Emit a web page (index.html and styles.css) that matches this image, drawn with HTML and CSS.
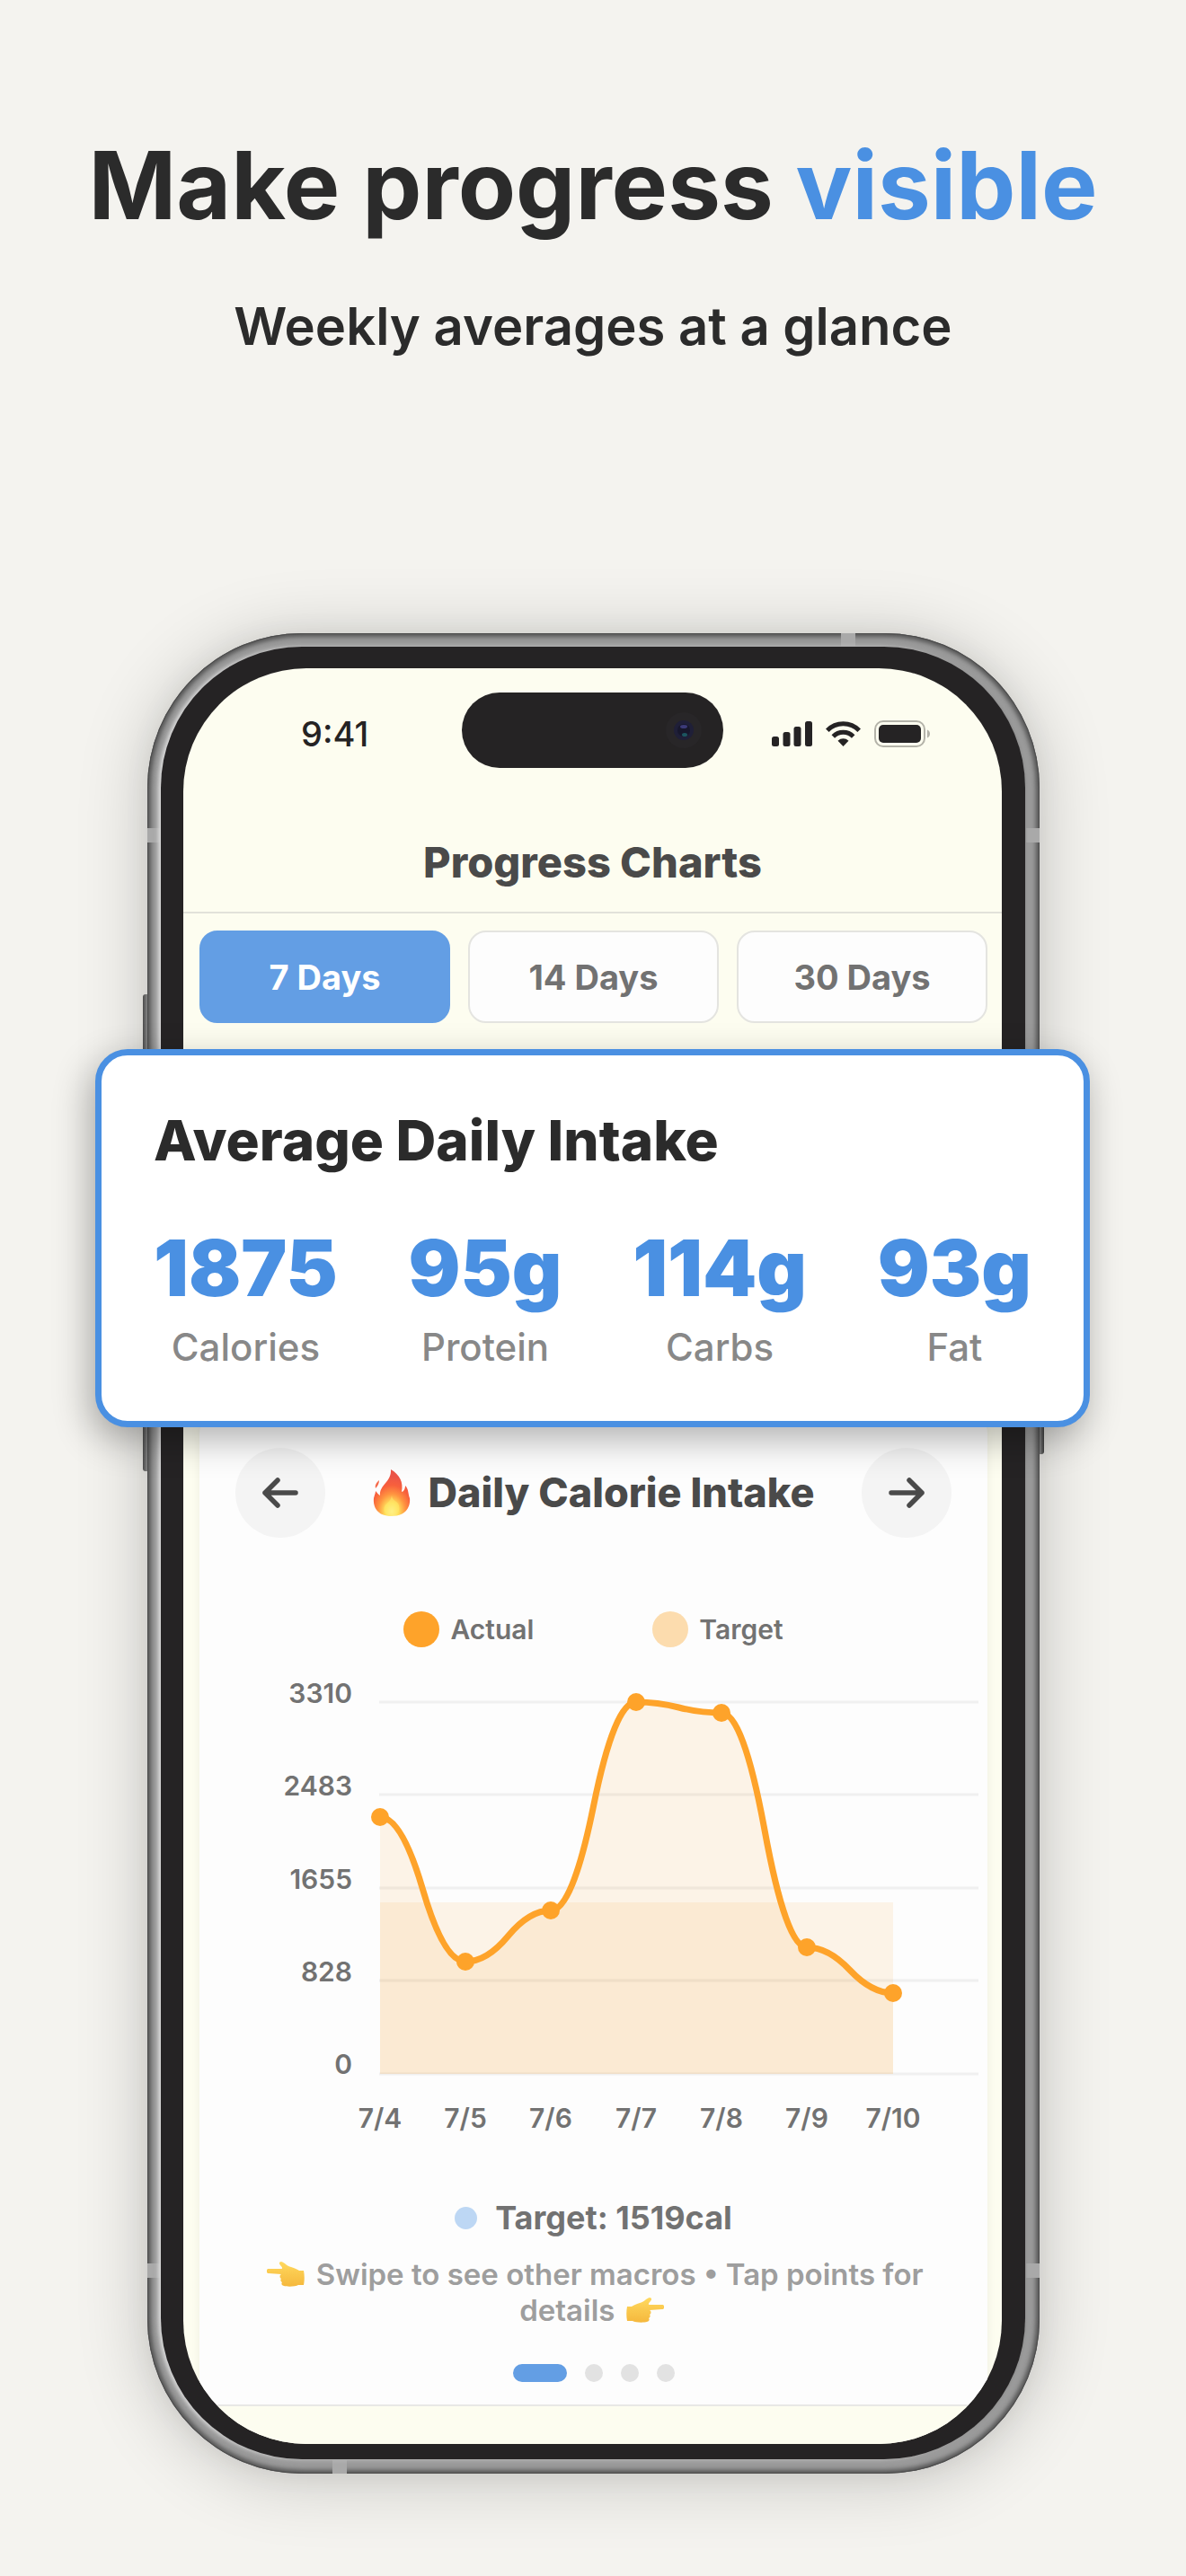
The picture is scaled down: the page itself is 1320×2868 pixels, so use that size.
FILE: index.html
```html
<!DOCTYPE html>
<html lang="en">
<head>
    <meta charset="UTF-8">
    <meta name="viewport" content="width=device-width, initial-scale=1.0">
    <title>Progress Charts</title>
    <link rel="stylesheet" href="styles.css">
</head>
<body>
    <header class="hero">
        <h1>Make progress <span>visible</span></h1>
        <p>Weekly averages at a glance</p>
    </header>

    <main class="stage">
        <!-- Side buttons and antenna bands -->
        <i class="side-key key-left"></i>
        <i class="side-key key-right"></i>

        <div class="phone">
            <i class="band band-left band-upper"></i>
            <i class="band band-right band-upper"></i>
            <i class="band band-left band-lower"></i>
            <i class="band band-right band-lower"></i>
            <i class="band band-top"></i>
            <i class="band band-bottom"></i>

            <div class="bezel">
                <div class="screen">
                    <!-- Status bar -->
                    <div class="status-bar">
                        <span class="time">9:41</span>
                        <div class="island">
                            <svg width="42" height="42" viewBox="0 0 42 42">
                                <circle cx="21" cy="21" r="20" fill="#282628"/>
                                <circle cx="21" cy="21" r="11" fill="#1f1f38"/>
                                <circle cx="21" cy="21" r="7" fill="#17172c"/>
                                <ellipse cx="21" cy="17" rx="4" ry="2" fill="#3b3a78"/>
                                <ellipse cx="22" cy="26" rx="3" ry="2" fill="#1c5560"/>
                            </svg>
                        </div>
                        <div class="status-icons">
                            <svg width="45" height="28" viewBox="0 0 45 28" fill="#252324">
                                <rect x="0" y="17" width="8" height="11" rx="2.5"/>
                                <rect x="12.5" y="12" width="8" height="16" rx="2.5"/>
                                <rect x="24.5" y="6" width="8" height="22" rx="2.5"/>
                                <rect x="37" y="0" width="8" height="28" rx="2.5"/>
                            </svg>
                            <svg width="39" height="28" viewBox="0 0 39 28">
                                <g fill="none" stroke="#252324" stroke-width="5">
                                    <path d="M1.8 10.2C11.5 .3 27.5 .3 37.2 10.2"/>
                                    <path d="M8.3 17C14.5 10.8 24.5 10.8 30.7 17"/>
                                </g>
                                <path d="M13.5 21.8C17 18.5 22 18.5 25.5 21.8L19.5 28Z" fill="#252324"/>
                            </svg>
                            <svg width="62" height="30" viewBox="0 0 62 30">
                                <rect x="1" y="1" width="55" height="28" rx="9" fill="none" stroke="#b4b3a9" stroke-width="2"/>
                                <rect x="5" y="5" width="47" height="20" rx="5" fill="#252324"/>
                                <path d="M59 10.5C63 12 63 18 59 19.5Z" fill="#b4b3a9"/>
                            </svg>
                        </div>
                    </div>

                    <div class="app-header">
                        <h2>Progress Charts</h2>
                    </div>

                    <!-- Range selector -->
                    <div class="range">
                        <button type="button" class="active">7 Days</button>
                        <button type="button">14 Days</button>
                        <button type="button">30 Days</button>
                    </div>

                    <section class="chart-card">
                        <div class="chart-nav">
                            <button type="button" class="round" aria-label="Previous chart">
                                <svg width="42" height="36" viewBox="0 0 42 36" fill="none" stroke="#4a4a4a" stroke-width="5.5" stroke-linecap="round" stroke-linejoin="round">
                                    <path d="M38 18H4M18 4L4 18L18 32"/>
                                </svg>
                            </button>
                            <h3>
                                <svg class="fire" width="42" height="52" viewBox="0 0 42 52">
                                    <defs>
                                        <radialGradient id="flame" cx=".5" cy=".9" r=".75">
                                            <stop offset="0" stop-color="#fff7a0"/>
                                            <stop offset=".25" stop-color="#ffdf5a"/>
                                            <stop offset=".5" stop-color="#ff9440"/>
                                            <stop offset=".75" stop-color="#f8603c"/>
                                            <stop offset="1" stop-color="#ec5548"/>
                                        </radialGradient>
                                    </defs>
                                    <path d="M20 0C30 6 34 14 32 25C34 25 36 22 36 18C40 22 39 27 41 32C42 40 38 52 21 52C5 52 0 42 1 32C2 28 3 26 3 24C5 26 6 28 8 29C7 17 21 14 20 0Z" fill="url(#flame)"/>
                                    <path d="M7 12C4 15 2 17 3 21C5 19 7 16 7 12Z" fill="#f5694a"/>
                                    <path d="M21 29C22 36 27 34 29 40C31 47 26 51 20 51C14 51 11 46 13 41C15 37 20 36 21 29Z" fill="#ffe96b" opacity=".5"/>
                                </svg>
                                Daily Calorie Intake
                            </h3>
                            <button type="button" class="round" aria-label="Next chart">
                                <svg width="42" height="36" viewBox="0 0 42 36" fill="none" stroke="#4a4a4a" stroke-width="5.5" stroke-linecap="round" stroke-linejoin="round">
                                    <path d="M4 18H38M24 4L38 18L24 32"/>
                                </svg>
                            </button>
                        </div>

                        <div class="legend">
                            <span><i class="dot-actual"></i>Actual</span>
                            <span><i class="dot-target"></i>Target</span>
                        </div>

                        <svg class="chart" viewBox="0 0 877 566" role="img" aria-label="Daily calories from 7/4 to 7/10">
                            <g class="grid">
                                <path d="M200 61H867M200 164H867M200 268H867M200 371H867M200 475H867"/>
                            </g>
                            <!-- Target area, then the area under the curve -->
                            <path class="area" d="M201 284H772V475H201Z"/>
                            <path class="area" d="M201 189Q225 189 248.5 269.5Q272 350 296 350Q320 350 343.5 321.5Q367 293 391 293Q415 293 438.5 177Q462 61 486 61Q510 61 533.5 67Q557 73 581 73Q605 73 629 203.5Q653 334 676 334Q700 334 724 359.5Q748 385 772 385V475H201Z"/>
                            <path class="line" d="M201 189Q225 189 248.5 269.5Q272 350 296 350Q320 350 343.5 321.5Q367 293 391 293Q415 293 438.5 177Q462 61 486 61Q510 61 533.5 67Q557 73 581 73Q605 73 629 203.5Q653 334 676 334Q700 334 724 359.5Q748 385 772 385"/>
                            <g fill="#fea32a">
                                <circle cx="201" cy="189" r="10"/>
                                <circle cx="296" cy="350" r="10"/>
                                <circle cx="391" cy="293" r="10"/>
                                <circle cx="486" cy="61" r="10"/>
                                <circle cx="581" cy="73" r="10"/>
                                <circle cx="676" cy="334" r="10"/>
                                <circle cx="772" cy="385" r="10"/>
                            </g>
                            <g class="labels" text-anchor="end">
                                <text x="170" y="62">3310</text>
                                <text x="170" y="165">2483</text>
                                <text x="170" y="269">1655</text>
                                <text x="170" y="372">828</text>
                                <text x="170" y="475">0</text>
                            </g>
                            <g class="labels" text-anchor="middle">
                                <text x="201" y="535">7/4</text>
                                <text x="296" y="535">7/5</text>
                                <text x="391" y="535">7/6</text>
                                <text x="486" y="535">7/7</text>
                                <text x="581" y="535">7/8</text>
                                <text x="676" y="535">7/9</text>
                                <text x="772" y="535">7/10</text>
                            </g>
                        </svg>

                        <p class="target"><i></i>Target: 1519cal</p>
                        <p class="hint">
                            <svg class="hand" width="42" height="28" viewBox="0 0 42 28">
                                <use href="#hand"/>
                            </svg>
                            Swipe to see other macros • Tap points for details
                            <svg class="hand" width="42" height="28" viewBox="0 0 42 28">
                                <defs>
                                    <linearGradient id="skin" x1="0" y1="0" x2="0" y2="1">
                                        <stop offset="0" stop-color="#ffd95e"/>
                                        <stop offset="1" stop-color="#f5b83d"/>
                                    </linearGradient>
                                    <path id="hand" fill="url(#skin)" d="M2 8H16C18 8 17 6 15 4C13 2 14 0 16 0C20 1 22 5 27 6C31 7 34 9 36 10L41 10C42 15 42 21 41 26L35 26C32 28 22 28 19 27C16 26 16 24 17 23C15 22 15 20 16 19C14 18 14 15 16 14L2 13C-1 13 -1 8 2 8Z"/>
                                </defs>
                                <use href="#hand" transform="matrix(-1 0 0 1 42 0)"/>
                            </svg>
                        </p>

                        <div class="pager">
                            <i class="current"></i><i></i><i></i><i></i>
                        </div>
                    </section>
                    <div class="tab-edge"></div>
                </div>
            </div>
        </div>

        <!-- Summary card floating over the phone -->
        <section class="summary">
            <h2>Average Daily Intake</h2>
            <dl>
                <div><dd>1875</dd><dt>Calories</dt></div>
                <div><dd>95g</dd><dt>Protein</dt></div>
                <div><dd>114g</dd><dt>Carbs</dt></div>
                <div><dd>93g</dd><dt>Fat</dt></div>
            </dl>
        </section>
    </main>
</body>
</html>
```
FILE: styles.css
```css
* {
    box-sizing: border-box;
}

body {
    font-family: Inter, "Liberation Sans", sans-serif;
    margin: 0;
    padding: 138px 0 114px;
    background: #f4f3ef;
    color: #2b2b2b;
}

h1, h2, h3, p, dl, dd {
    margin: 0;
}

button {
    font-family: inherit;
    cursor: pointer;
}

svg {
    display: block;
}

/* Headline */
.hero {
    text-align: center;
}

.hero h1 {
    font-size: 105px;
    line-height: 136px;
    font-weight: 700;
}

.hero h1 span {
    color: #4a90e2;
}

.hero p {
    margin-top: 52px;
    font-size: 58px;
    line-height: 74px;
    font-weight: 600;
}

/* Phone */
.stage {
    position: relative;
    margin: 305px 163px 0 164px;
}

.phone {
    position: relative;
    padding: 15px 16px 16px 15px;
    border-radius: 172px;
    background: #9a9a9a;
    box-shadow: 0 6px 80px rgba(0, 0, 0, 0.2), 0 0 30px rgba(0, 0, 0, 0.06),
        inset 0 0 0 1px #4c4c4c, inset 0 0 5px 4px #555;
}

.bezel {
    position: relative;
    padding: 24px 26px 17px 25px;
    border-radius: 157px;
    background: #252324;
    box-shadow: -3px 0 4px #dcdcdc, 0 0 2px 1px #888;
}

.screen {
    overflow: hidden;
    border-radius: 137px;
    background: #fdfdf0;
}

.side-key {
    position: absolute;
    width: 10px;
    border-radius: 3px;
    background: linear-gradient(90deg, #555, #999, #444);
}

.key-left {
    left: -5px;
    top: 402px;
    height: 531px;
}

.key-right {
    right: -5px;
    top: 500px;
    height: 414px;
}

.band {
    position: absolute;
    width: 15px;
    height: 16px;
    background: #a9a9a9;
}

.band-left { left: 0; }
.band-right { right: 0; }
.band-upper { top: 217px; }
.band-lower { bottom: 218px; }

.band-top {
    top: 0;
    right: 205px;
    width: 16px;
    height: 15px;
}

.band-bottom {
    bottom: 0;
    left: 206px;
    width: 16px;
    height: 15px;
}

/* Status bar */
.status-bar {
    display: grid;
    grid-template-columns: 1fr auto 1fr;
    padding-top: 27px;
}

.time {
    padding: 8px 0 0 131px;
    font-size: 38px;
    line-height: 76px;
    font-weight: 500;
    color: #252324;
}

.island {
    display: flex;
    align-items: center;
    justify-content: flex-end;
    width: 291px;
    height: 84px;
    padding-right: 23px;
    border-radius: 42px;
    background: #252324;
}

.status-icons {
    display: flex;
    align-items: center;
    justify-content: flex-end;
    gap: 15px;
    padding: 8px 80px 0 0;
}

.app-header {
    padding: 77px 0 27px;
    border-bottom: 2px solid #e2e2da;
    text-align: center;
}

.app-header h2 {
    font-size: 47px;
    line-height: 56px;
    font-weight: 800;
    color: #4a4a4a;
}

/* Range buttons */
.range {
    display: flex;
    gap: 20px;
    padding: 19px 16px 0 18px;
}

.range button {
    flex: 1;
    height: 103px;
    padding: 0;
    border: 2px solid #e4e4e0;
    border-radius: 20px;
    background: #fdfdfd;
    color: #727272;
    font-size: 38px;
    font-weight: 700;
}

.range .active {
    border-color: #639ee4;
    background: #639ee4;
    color: #fff;
}

/* Chart card */
.chart-card {
    margin: 433px 16px 0 18px;
    padding: 40px 0 25px;
    border-radius: 24px 24px 0 0;
    background: #fdfdfd;
    box-shadow: 0 0 12px rgba(0, 0, 0, 0.06);
}

.chart-nav {
    display: flex;
    align-items: center;
    justify-content: space-between;
    padding: 0 40px;
}

.round {
    display: flex;
    align-items: center;
    justify-content: center;
    width: 100px;
    height: 100px;
    padding: 0;
    border: 0;
    border-radius: 50%;
    background: #f4f4f4;
}

.chart-nav h3 {
    display: flex;
    align-items: center;
    gap: 20px;
    font-size: 45px;
    line-height: 54px;
    font-weight: 800;
    color: #4a4a4a;
}

.legend {
    display: flex;
    justify-content: center;
    gap: 132px;
    margin-top: 82px;
    font-size: 30px;
    line-height: 40px;
    font-weight: 600;
    color: #727272;
}

.legend span {
    display: flex;
    gap: 12px;
}

.legend i {
    width: 40px;
    height: 40px;
    border-radius: 50%;
}

.dot-actual { background: #fea32a; }
.dot-target { background: #fcdcae; }

.chart {
    width: 100%;
}

.grid path {
    stroke: #f0f0f0;
    stroke-width: 3;
}

.area {
    fill: #f79410;
    fill-opacity: 0.09;
}

.line {
    fill: none;
    stroke: #fea32a;
    stroke-width: 7;
}

.labels {
    fill: #727272;
    font-size: 30px;
    font-weight: 600;
}

.target {
    display: flex;
    align-items: center;
    justify-content: center;
    gap: 20px;
    margin-top: 47px;
    font-size: 36px;
    line-height: 44px;
    font-weight: 700;
    color: #727272;
}

.target i {
    width: 25px;
    height: 25px;
    border-radius: 50%;
    background: #bdd7f4;
}

.hint {
    margin-top: 21px;
    padding: 0 60px;
    font-size: 33px;
    line-height: 40px;
    font-weight: 600;
    text-align: center;
    color: #9e9e9e;
}

.hand {
    display: inline-block;
    margin: 0 4px;
    vertical-align: -2px;
}

.pager {
    display: flex;
    justify-content: center;
    gap: 20px;
    margin-top: 40px;
}

.pager i {
    width: 20px;
    height: 20px;
    border-radius: 10px;
    background: #e2e2e2;
}

.pager .current {
    width: 60px;
    background: #639ee4;
}

.tab-edge {
    height: 44px;
    border-top: 2px solid #e8e8e6;
    background: #fdfdf0;
    position: relative;
}

/* Summary card */
.summary {
    position: absolute;
    top: 463px;
    left: -58px;
    right: -56px;
    padding: 57px 58px 56px;
    border: 7px solid #4a90e2;
    border-radius: 36px;
    background: #fff;
    box-shadow: -6px 14px 40px rgba(0, 0, 0, 0.3);
}

.summary h2 {
    font-size: 62px;
    line-height: 76px;
    font-weight: 800;
}

.summary dl {
    display: flex;
    justify-content: space-between;
    margin-top: 54px;
    text-align: center;
}

.summary dl div {
    display: flex;
    flex-direction: column;
}

.summary dd {
    font-size: 86px;
    line-height: 100px;
    font-weight: 900;
    color: #4a90e2;
}

.summary dt {
    margin-top: 12px;
    font-size: 42px;
    line-height: 52px;
    font-weight: 500;
    color: #888;
}
```
